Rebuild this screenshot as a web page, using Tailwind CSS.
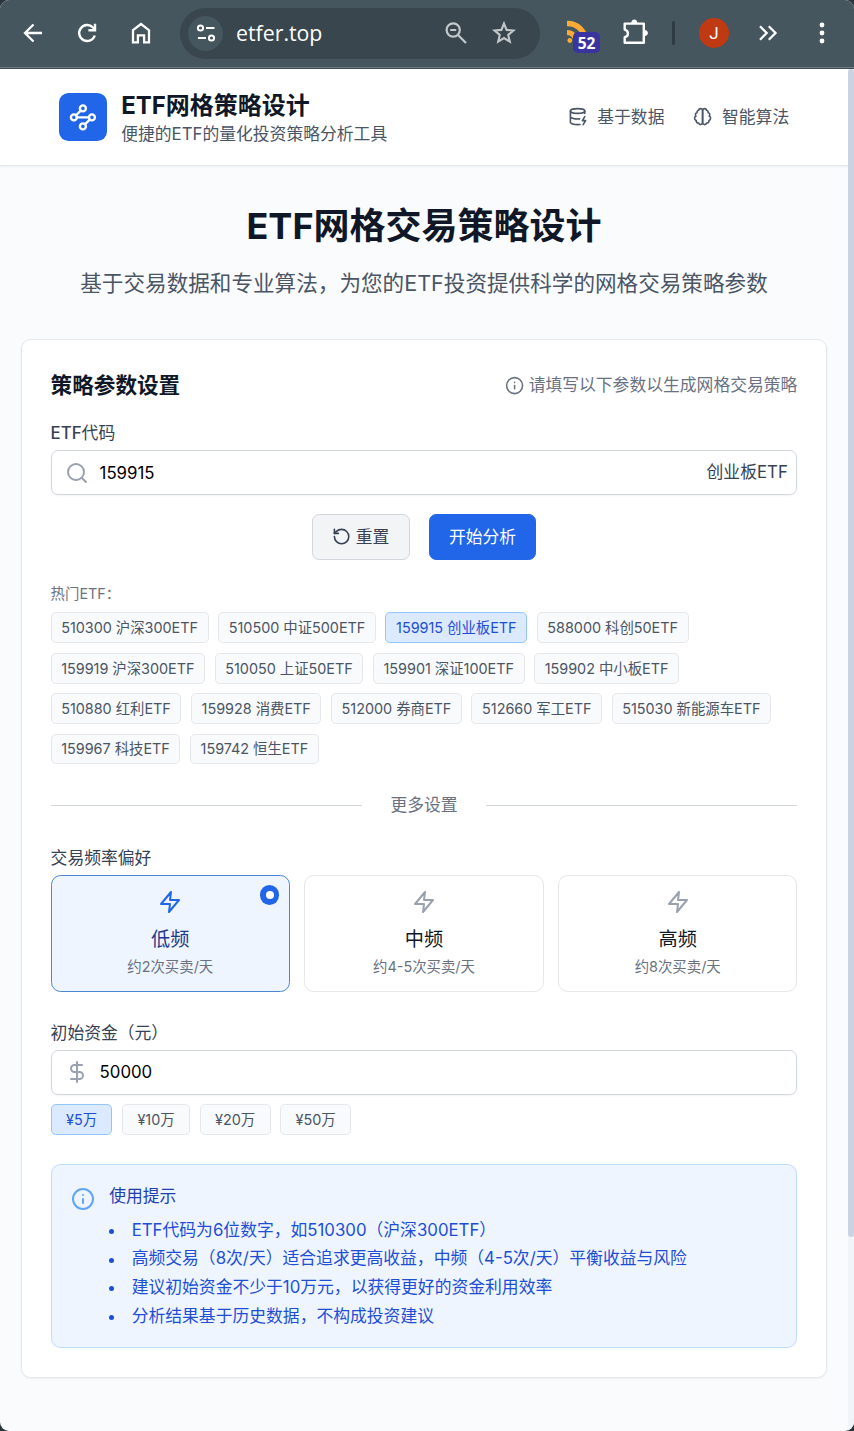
<!DOCTYPE html>
<html lang="zh-CN" class="text-[19.2px]">
<head>
<meta charset="utf-8">
<title>ETF网格策略设计</title>
<script src="https://cdn.jsdelivr.net/npm/@tailwindcss/browser@4"></script>
</head>
<body class="bg-[#2a353b] font-['Inter','Noto_Sans_CJK_SC',sans-serif]">
<svg class="hidden">
  <symbol id="zap" viewBox="0 0 24 24"><polygon points="13 2 3 14 12 14 11 22 21 10 12 10 13 2" fill="none" stroke="currentColor" stroke-width="2" stroke-linecap="round" stroke-linejoin="round"/></symbol>
  <symbol id="info" viewBox="0 0 24 24"><g fill="none" stroke="currentColor" stroke-width="2" stroke-linecap="round" stroke-linejoin="round"><circle cx="12" cy="12" r="10"/><path d="M12 16v-4M12 8h.01"/></g></symbol>
</svg>
<div class="h-[1431px] w-[854px] overflow-hidden rounded-[9px] bg-[#fafbfd]">
  <!-- browser toolbar -->
  <div class="flex h-[69px] items-center border-b border-[#3e4b52] bg-[#45565f] pb-[2px] pl-[19px] text-white shadow-[inset_0_-1px_0_#6b7b83]">
    <svg class="size-[28px]" viewBox="0 0 28 28" fill="none" stroke="currentColor" stroke-width="2.3"><path d="M23 14H6.5M14.5 5.5 6 14l8.500 8.500"/></svg>
    <svg class="ml-[26px] size-[28px]" viewBox="0 0 28 28" fill="none" stroke="currentColor" stroke-width="2.4"><path d="M21.800 16.500A8 8 0 1 1 20 8.500L22 10.500"/><path d="M22 4.800v6.400h-6.600"/></svg>
    <svg class="ml-[26px] size-[28px]" viewBox="0 0 28 28" fill="none" stroke="currentColor" stroke-width="2.300"><path d="M6 11.200 14 5l8 6.200V23.300h-4.900v-7h-6.200v7H6z"/></svg>
    <div class="ml-[25px] flex h-[51px] w-[360px] items-center rounded-full bg-[#39464d] pl-[8px]">
      <div class="flex size-[35px] items-center justify-center rounded-full bg-[#45565e]">
        <svg class="size-[20px]" viewBox="0 0 20 20" fill="none" stroke="currentColor" stroke-width="2"><circle cx="4.500" cy="5" r="2.600"/><path d="M10 5h8.500M2 15h8"/><circle cx="15.500" cy="15" r="2.600"/></svg>
      </div>
      <span class="ml-[13px] w-[207px] font-['Open_Sans','Noto_Sans',sans-serif] text-[21.300px] leading-[30px]">etfer.top</span>
      <svg class="size-[26px] text-[#c3c8cc]" viewBox="0 0 26 26" fill="none" stroke="currentColor" stroke-width="2.200"><circle cx="10.200" cy="10" r="6.600"/><path d="M7.200 10h6M15 15l8 8"/></svg>
      <svg class="ml-[22px] size-[26px] text-[#c3c8cc]" viewBox="0 0 26 26" fill="none" stroke="currentColor" stroke-width="2.100"><path d="m13 3.600 2.600 6.300 6.800.6-5.200 4.400 1.600 6.700-5.800-3.600-5.800 3.600 1.600-6.700-5.200-4.400 6.800-.6z"/></svg>
    </div>
    <div class="relative ml-[26px] h-[36px] w-[36px]">
      <svg class="size-[28px]" viewBox="0 0 28 28" fill="none" stroke="#fbab35" stroke-width="5.500"><path d="M1 8.500C12 8.500 19 16 20 27"/><path d="M1 17.500c5 0 9 4 9.500 9" stroke-width="5"/><circle cx="3.800" cy="25.500" r="2.400" fill="#fbab35" stroke="none"/></svg>
      <span class="absolute top-[17px] left-[7px] flex h-[21px] w-[27px] items-center justify-center rounded-[5px] bg-[#3a34a0] font-['Open_Sans','Noto_Sans',sans-serif] text-[15.500px] leading-none font-bold"><span class="translate-y-px">52</span></span>
    </div>
    <svg class="ml-[18px] size-[30px]" viewBox="0 0 30 30" fill="none" stroke="currentColor" stroke-width="2.400" stroke-linejoin="round"><path d="M4.700 5.600h19.100v19.200H4.700v-5.600c4.300-1.200 4.300-6.400 0-7.600z"/><path d="M11.200 5c.4-4.600 5.800-4.600 6.200 0zM24.600 12.100c4.400.4 4.400 5.800 0 6.200z" fill="currentColor" stroke="none"/></svg>
    <div class="ml-[22px] h-[24px] w-[3px] rounded-full bg-[#2f3b42]"></div>
    <div class="ml-[24px] flex size-[30px] items-center justify-center rounded-full bg-[#bf3a13] font-['Roboto',sans-serif] text-[17px] leading-none">J</div>
    <svg class="ml-[25px] size-[28px]" viewBox="0 0 28 28" fill="none" stroke="currentColor" stroke-width="2.300"><path d="m6 7.300 6.700 6.700L6 20.700M14.800 7.300l6.700 6.700-6.700 6.700"/></svg>
    <svg class="ml-[26px] size-[28px]" viewBox="0 0 28 28" fill="currentColor"><circle cx="14" cy="6" r="2.400"/><circle cx="14" cy="14" r="2.400"/><circle cx="14" cy="22" r="2.400"/></svg>
  </div>

  <div class="flex h-[1362px]">
    <div class="w-[848px]">
      <header class="flex h-[97px] items-center justify-between border-b border-gray-200 bg-white px-[58.800px] shadow-xs">
        <div class="flex items-center gap-3">
          <div class="flex size-10 items-center justify-center rounded-lg bg-[#2165e8] text-white">
            <svg class="size-6 translate-x-[0.500px]" viewBox="0 0 24 24" fill="none" stroke="currentColor" stroke-width="2" stroke-linecap="round"><circle cx="12" cy="4.500" r="2.500"/><path d="m10.200 6.300-3.900 3.900"/><circle cx="4.500" cy="12" r="2.500"/><path d="M7 12h10"/><circle cx="19.500" cy="12" r="2.500"/><path d="m13.800 17.700 3.900-3.900"/><circle cx="12" cy="19.500" r="2.500"/></svg>
          </div>
          <div class="translate-y-px">
            <h1 class="text-xl font-bold text-gray-900">ETF网格策略设计</h1>
            <p class="text-sm text-gray-600">便捷的ETF的量化投资策略分析工具</p>
          </div>
        </div>
        <div class="flex gap-6 text-sm text-gray-600">
          <div class="flex items-center gap-2">
            <svg class="size-4" viewBox="0 0 24 24" fill="none" stroke="currentColor" stroke-width="2" stroke-linecap="round" stroke-linejoin="round"><ellipse cx="12" cy="5" rx="9" ry="3"/><path d="M3 5v14a9 3 0 0 0 12 2.840M21 5v3M21 12l-3 5h4l-3 5M3 12a9 3 0 0 0 11.590 2.870"/></svg>
            <span class="translate-y-px">基于数据</span>
          </div>
          <div class="flex items-center gap-2">
            <svg class="size-4" viewBox="0 0 24 24" fill="none" stroke="currentColor" stroke-width="2" stroke-linecap="round" stroke-linejoin="round"><path d="M9.500 2A2.500 2.500 0 0 1 12 4.500v15a2.500 2.500 0 0 1-4.960.44 2.500 2.500 0 0 1-2.960-3.080 3 3 0 0 1-.34-5.580 2.500 2.500 0 0 1 1.320-4.240 2.500 2.500 0 0 1 1.980-3A2.500 2.500 0 0 1 9.500 2Z"/><path d="M14.500 2A2.500 2.500 0 0 0 12 4.500v15a2.500 2.500 0 0 0 4.960.44 2.500 2.500 0 0 0 2.960-3.080 3 3 0 0 0 .34-5.580 2.500 2.500 0 0 0-1.320-4.240 2.500 2.500 0 0 0-1.980-3A2.500 2.500 0 0 0 14.500 2Z"/></svg>
            <span class="translate-y-px">智能算法</span>
          </div>
        </div>
      </header>

      <main class="pt-8">
        <h2 class="translate-y-px text-center text-3xl font-bold text-gray-900">ETF网格交易策略设计</h2>
        <p class="mt-4 text-center text-lg text-gray-600">基于交易数据和专业算法，为您的ETF投资提供科学的网格交易策略参数</p>

        <section class="mx-auto mt-8 w-2xl rounded-lg border border-gray-200 bg-white p-6 shadow-xs">
          <div class="flex items-center justify-between">
            <h3 class="text-lg font-bold text-gray-900">策略参数设置</h3>
            <div class="flex items-center gap-1 text-sm text-gray-500"><svg class="size-4"><use href="#info"/></svg><span class="translate-y-px">请填写以下参数以生成网格交易策略</span></div>
          </div>

          <div class="mt-4 translate-y-px text-sm text-gray-700"><span class="font-medium">ETF</span>代码</div>
          <div class="mt-1 flex items-center rounded-md border border-gray-300 py-2 pr-[8.600px] pl-[13.400px] text-sm shadow-xs">
            <svg class="-my-1 size-5 text-gray-400" viewBox="0 0 24 24" fill="none" stroke="currentColor" stroke-width="2" stroke-linecap="round"><circle cx="11" cy="11" r="8"/><path d="m21 21-4.300-4.300"/></svg>
            <span class="ml-[10.600px] flex-1 translate-y-px text-black">159915</span>
            <span class="text-gray-700">创业板ETF</span>
          </div>

          <div class="mt-4 flex justify-center gap-4 text-sm">
            <div class="flex items-center gap-1 rounded-md border border-gray-300 bg-gray-100 px-4 py-2 text-gray-700">
              <svg class="size-4" viewBox="0 0 24 24" fill="none" stroke="currentColor" stroke-width="2" stroke-linecap="round" stroke-linejoin="round"><path d="M3 12a9 9 0 1 0 9-9 9.750 9.750 0 0 0-6.740 2.740L3 8"/><path d="M3 3v5h5"/></svg>
              <span class="translate-y-px">重置</span>
            </div>
            <div class="rounded-md border border-[#2165e8] bg-[#2165e8] px-4 py-2 text-white"><div class="translate-y-px">开始分析</div></div>
          </div>

          <div class="mt-5 text-xs text-gray-500">热门ETF：</div>
          <div class="mt-2 flex flex-wrap gap-2 text-xs tracking-[-0.016px] text-gray-600 *:rounded *:border *:px-2 *:py-1">
            <span class="border-gray-200 bg-gray-50">510300 沪深300ETF</span>
            <span class="border-gray-200 bg-gray-50">510500 中证500ETF</span>
            <span class="border-[#93c5fd] bg-[#dbeafe] text-[#1d4ed8]">159915 创业板ETF</span>
            <span class="border-gray-200 bg-gray-50">588000 科创50ETF</span>
            <span class="border-gray-200 bg-gray-50">159919 沪深300ETF</span>
            <span class="border-gray-200 bg-gray-50">510050 上证50ETF</span>
            <span class="border-gray-200 bg-gray-50">159901 深证100ETF</span>
            <span class="border-gray-200 bg-gray-50">159902 中小板ETF</span>
            <span class="border-gray-200 bg-gray-50">510880 红利ETF</span>
            <span class="border-gray-200 bg-gray-50">159928 消费ETF</span>
            <span class="border-gray-200 bg-gray-50">512000 券商ETF</span>
            <span class="border-gray-200 bg-gray-50">512660 军工ETF</span>
            <span class="border-gray-200 bg-gray-50">515030 新能源车ETF</span>
            <span class="border-gray-200 bg-gray-50">159967 科技ETF</span>
            <span class="border-gray-200 bg-gray-50">159742 恒生ETF</span>
          </div>

          <div class="mt-6 flex items-center gap-6 text-sm text-gray-500">
            <div class="h-px flex-1 bg-gray-300"></div>
            <span class="translate-y-px">更多设置</span>
            <div class="h-px flex-1 bg-gray-300"></div>
          </div>

          <div class="mt-6 translate-y-px text-sm text-gray-700">交易频率偏好</div>
          <div class="mt-1 grid grid-cols-3 gap-3">
            <div class="relative flex flex-col items-center rounded-lg border border-[#4a86d6] bg-[#eef5ff] p-3">
              <svg class="size-5 text-[#2165e8]"><use href="#zap"/></svg>
              <div class="mt-2 translate-y-px text-base text-[#1e3a8a]">低频</div>
              <div class="mt-1 text-xs text-gray-500">约2次买卖/天</div>
              <div class="absolute top-2 right-2 flex size-4 items-center justify-center rounded-full bg-[#2165e8]"><div class="size-[7.600px] rounded-full bg-white"></div></div>
            </div>
            <div class="flex flex-col items-center rounded-lg border border-gray-200 p-3">
              <svg class="size-5 text-gray-400"><use href="#zap"/></svg>
              <div class="mt-2 translate-y-px text-base text-gray-900">中频</div>
              <div class="mt-1 text-xs text-gray-500">约4-5次买卖/天</div>
            </div>
            <div class="flex flex-col items-center rounded-lg border border-gray-200 p-3">
              <svg class="size-5 text-gray-400"><use href="#zap"/></svg>
              <div class="mt-2 translate-y-px text-base text-gray-900">高频</div>
              <div class="mt-1 text-xs text-gray-500">约8次买卖/天</div>
            </div>
          </div>

          <div class="mt-6 translate-y-px text-sm text-gray-700">初始资金（元）</div>
          <div class="mt-[5.200px] flex h-[45px] items-center rounded-md border border-gray-300 pr-2 pl-[13.400px] text-sm shadow-xs">
            <svg class="-my-1 size-5 text-gray-400" viewBox="0 0 24 24" fill="none" stroke="currentColor" stroke-width="2" stroke-linecap="round" stroke-linejoin="round"><path d="M12 2v20M17 5H9.500a3.500 3.500 0 0 0 0 7h5a3.500 3.500 0 0 1 0 7H6"/></svg>
            <span class="ml-[10.600px] translate-y-px text-black">50000</span>
          </div>
          <div class="mt-[9.400px] flex gap-2 text-xs text-gray-600 *:rounded *:border *:px-3 *:py-1">
            <span class="border-[#93c5fd] bg-[#dbeafe] text-[#1d4ed8]">¥5万</span>
            <span class="border-gray-200 bg-gray-50">¥10万</span>
            <span class="border-gray-200 bg-gray-50">¥20万</span>
            <span class="border-gray-200 bg-gray-50">¥50万</span>
          </div>

          <div class="mt-6 flex gap-3 rounded-lg border border-[#bfdbfe] bg-[#eef5ff] p-4 text-sm">
            <svg class="mt-[3px] size-5 text-[#60a5fa]"><use href="#info"/></svg>
            <div class="translate-y-px">
              <div class="text-[#1e40af]">使用提示</div>
              <ul class="mt-2 space-y-1 text-[#1d4ed8]">
                <li class="flex items-center"><i class="mt-[2px] mr-[17.500px] size-[5px] rounded-full bg-current"></i>ETF代码为6位数字，如510300（沪深300ETF）</li>
                <li class="flex items-center"><i class="mt-[2px] mr-[17.500px] size-[5px] rounded-full bg-current"></i>高频交易（8次/天）适合追求更高收益，中频（4-5次/天）平衡收益与风险</li>
                <li class="flex items-center"><i class="mt-[1px] mr-[17.500px] size-[5px] rounded-full bg-current"></i>建议初始资金不少于10万元，以获得更好的资金利用效率</li>
                <li class="flex items-center"><i class="mt-[1px] mr-[17.500px] size-[5px] rounded-full bg-current"></i>分析结果基于历史数据，不构成投资建议</li>
              </ul>
            </div>
          </div>
        </section>
      </main>
    </div>
    <!-- scrollbar -->
    <div class="w-[6px] bg-[#f1f5f9]"><div class="h-[1168px] rounded-[3px] bg-[#cbd3e3]"></div></div>
  </div>
</div>
</body>
</html>
